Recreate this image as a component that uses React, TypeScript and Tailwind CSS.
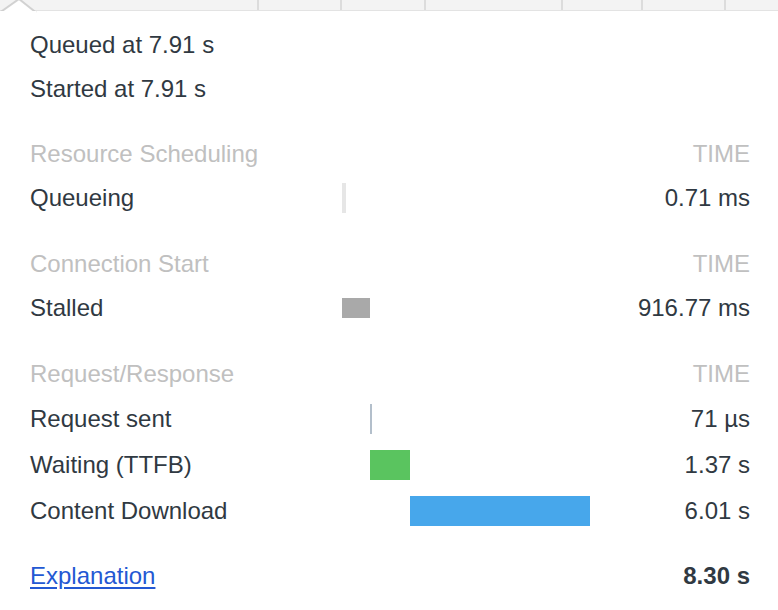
// Network timing popover — 778×610

const TICKS = [257, 340, 424, 561, 641, 724];

interface Bar {
  left: number;
  width: number;
  height: number;
  color: string;
}

interface RowProps {
  label: string;
  time: string;
  bar: Bar;
  tall?: boolean;
}

function TimingRow({ label, time, bar, tall }: RowProps) {
  return (
    <div className={`flex items-center ${tall ? "h-[46px]" : "h-[44px]"}`}>
      <div className="w-[312px] shrink-0">{label}</div>
      <div className="relative h-full w-[260px] shrink-0">
        <div
          className={`absolute top-1/2 -translate-y-1/2 ${bar.color}`}
          style={{ left: bar.left, width: bar.width, height: bar.height }}
        />
      </div>
      <div className="flex-1 text-right">{time}</div>
    </div>
  );
}

function SectionHeader({ title }: { title: string }) {
  return (
    <div className="flex h-[44px] items-center justify-between text-[#c0c0c0]">
      <span>{title}</span>
      <span>TIME</span>
    </div>
  );
}

export default function App() {
  return (
    <div className="relative h-[610px] w-[778px] overflow-hidden bg-white font-['Liberation_Sans',Arial,sans-serif] text-[24px] leading-none text-[#303942]">
      {/* Header strip of the table behind the popover */}
      <div className="relative h-[11px] border-b border-[#e3e3e3] bg-[#f3f3f3]">
        {TICKS.map((x) => (
          <div key={x} className="absolute top-0 h-full w-[2px] bg-[#dcdcdc]" style={{ left: x }} />
        ))}
      </div>

      {/* Popover arrow */}
      <svg className="absolute left-0 top-0" width="40" height="14" viewBox="0 0 40 14">
        <path d="M0 13 L19 -1 L36 13 Z" fill="#ffffff" />
        <path d="M0 12.5 L19 -1" stroke="#c8c8c8" strokeWidth="2" fill="none" opacity="0.8" />
        <path d="M19 -1 L36 12.5" stroke="#c8c8c8" strokeWidth="2" fill="none" opacity="0.8" />
        <rect x="0" y="11" width="36" height="3" fill="#ffffff" />
      </svg>

      <div className="pl-[30px] pr-[28px] pt-[12px]">
        <div className="flex h-[44px] items-center">Queued at 7.91 s</div>
        <div className="flex h-[44px] items-center">Started at 7.91 s</div>

        <div className="mt-[21px]">
          <SectionHeader title="Resource Scheduling" />
          <TimingRow label="Queueing" time="0.71 ms" bar={{ left: 0, width: 4, height: 30, color: "bg-[#e6e6e6]" }} />
        </div>

        <div className="mt-[22px]">
          <SectionHeader title="Connection Start" />
          <TimingRow label="Stalled" time="916.77 ms" bar={{ left: 0, width: 28, height: 20, color: "bg-[#a9a9a9]" }} />
        </div>

        <div className="mt-[22px]">
          <SectionHeader title="Request/Response" />
          <TimingRow tall label="Request sent" time="71 µs" bar={{ left: 28, width: 2, height: 30, color: "bg-[#b3bfcb]" }} />
          <TimingRow tall label="Waiting (TTFB)" time="1.37 s" bar={{ left: 28, width: 40, height: 30, color: "bg-[#5ac45f]" }} />
          <TimingRow tall label="Content Download" time="6.01 s" bar={{ left: 68, width: 180, height: 30, color: "bg-[#47a7eb]" }} />
        </div>

        <div className="mt-[20px] flex h-[44px] items-center justify-between">
          <a href="#" className="text-[#2358d3] underline underline-offset-[3px]">
            Explanation
          </a>
          <span className="font-bold">8.30 s</span>
        </div>
      </div>
    </div>
  );
}
